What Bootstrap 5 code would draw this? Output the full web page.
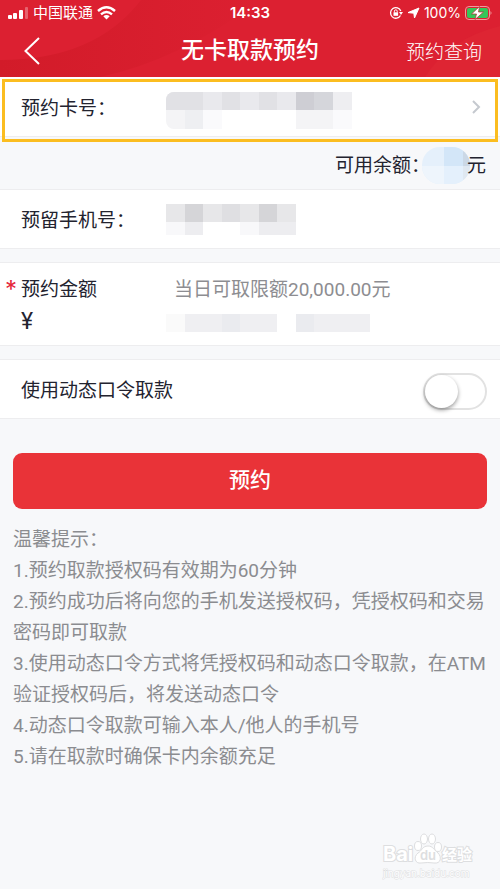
<!DOCTYPE html>
<html lang="zh-CN">
<head>
<meta charset="utf-8">
<meta name="viewport" content="width=device-width, initial-scale=1">
<title>无卡取款预约</title>
<link href="https://cdn.jsdelivr.net/npm/bootstrap@5.3.0/dist/css/bootstrap.min.css" rel="stylesheet">
<style>
body{font-family:Roboto,"Noto Sans CJK SC",sans-serif;font-size:19px;line-height:28px;color:#23232f;background:#f7f8fa}
.app-head{background:#dc2031;height:77px;color:#fff}
.head-art{z-index:0}
.status-bar{height:25px;font-family:Inter,"Noto Sans CJK SC",sans-serif;font-size:14px;line-height:24px}
.carrier,.clock{font-size:15px}
.side{flex:1 1 0}
.title{font-size:23px;line-height:32px;font-weight:500}
.nav-row{height:52px;padding:0 18px}
.back{margin-left:6px}
.head-link{color:#fff;font-weight:300}
.panel{background:#fff;border-top:1px solid #ededef;border-bottom:1px solid #ededef}
.first-panel{border-top:0;height:60px}
.form-line{height:60px}
.side-pad{padding-left:21px}
.label-col{width:145px}
.label-text,.star,.limit{padding-top:4px}
.frame{inset:2px 2px -6px 2px;border:3px solid #fbbd20;pointer-events:none}
.balance{height:52px;padding:6px 14px 0 0}
.masked-sum{margin:0 -3px 0 -8px}
.amount-panel{height:84px;padding-top:9px}
.gap-a{margin-top:13px}
.limit{color:#8d8d91;margin-left:8px}
.star{color:#e5263a;width:21px;padding-left:5px;font-family:Inter,sans-serif;font-size:24px}
.yen{font-size:23px}
.form-check-input.toggle{width:64px;height:37px;margin-right:13px;border:2px solid #e2e2e2;background:#fff;border-radius:19px;appearance:none}
.form-check-input.toggle::before{content:"";display:block;width:33px;height:33px;border-radius:50%;background:#fff;box-shadow:0 2px 4px #0006}
.form-check-input.toggle:checked{background:#e93338}
.form-check-input.toggle:checked::before{margin-left:27px}
.submit{background:#e93338;color:#fff;border-radius:9px;height:56px;font-size:21px;font-weight:500;border:0}
.submit:hover{background:#d92a30;color:#fff}
.submit-area{padding:34px 13px 0}
.tips{color:#8b8c90;line-height:31px;padding:15px 10px 0 13px}
.watermark{right:20px;bottom:4px}
</style>
<script src="https://cdn.jsdelivr.net/npm/bootstrap@5.3.0/dist/js/bootstrap.bundle.min.js"></script>
</head>
<body class="min-vh-100 position-relative">
<header class="app-head position-relative overflow-hidden">
  <svg class="head-art position-absolute top-0 start-0 w-100 h-100" viewBox="0 0 500 77" preserveAspectRatio="none" aria-hidden="true">
    <defs><linearGradient id="shade" x1="0" y1="0" x2="1" y2="0"><stop offset="0" stop-color="#d21b29"/><stop offset="1" stop-color="#dc2031"/></linearGradient></defs>
    <path d="M0 60Q95 60 141 0H260Q180 60 100 77H0Z" fill="url(#shade)"/>
    <path d="M425 77Q450 38 500 26V77Z" fill="#e02a36" opacity=".5"/>
  </svg>
  <div class="status-bar d-flex align-items-center px-2 position-relative">
    <div class="side d-flex align-items-center">
      <svg width="21" height="12" fill="#fff" aria-hidden="true"><rect y="8" width="4" height="4" rx="1"/><rect x="5" y="6" width="4" height="6" rx="1"/><rect x="11" y="3" width="4" height="9" rx="1"/><rect x="17" width="3" height="12" rx="1" opacity=".3"/></svg>
      <span class="carrier ms-1">中国联通</span>
      <svg class="ms-1" width="19" height="14" viewBox="0 0 19 14" fill="none" stroke="#fff" stroke-width="2.4" aria-hidden="true"><path d="M1 5Q9.500-2.500 18 5M4 8.300Q9.500 3.500 15 8.300"/><path d="M6.300 10.300Q9.500 7.700 12.700 10.300L9.500 13.500Z" fill="#fff" stroke="none"/></svg>
    </div>
    <span class="clock fw-semibold">14:33</span>
    <div class="side d-flex align-items-center justify-content-end">
      <svg width="14" height="14" viewBox="0 0 14 14" fill="none" stroke="#fff" stroke-width="1.300" aria-hidden="true"><path d="M11.500 9.500A5.300 5.300 0 1 1 11.800 5"/><path d="M10 6h4l-2 3z" fill="#fff" stroke="none"/><rect x="4.500" y="6.300" width="4.600" height="3.500" fill="#fff" stroke="none"/><path d="M5.400 6.500V5.200a1.400 1.400 0 0 1 2.800 0v1.300" stroke-width="1"/></svg>
      <svg class="mx-1" width="13" height="12" viewBox="0 0 13 12" fill="#fff" stroke="#fff" stroke-linejoin="round" aria-hidden="true"><path d="M12 1L7.500 11 6.800 6.200 1 5.600Z"/></svg>
      <span>100%</span>
      <svg class="ms-1" width="27" height="14" viewBox="0 0 27 14" aria-hidden="true"><rect x=".5" y=".5" width="24" height="13" rx="3.500" fill="none" stroke="#f09a9e"/><rect x="2" y="2" width="21" height="10" rx="2" fill="#35c759"/><path d="M25.500 5q2 2 0 4z" fill="#f09a9e"/><path d="M14.500.5L6.500 8h5L10 13.500 18.500 6h-5z" fill="#fff" stroke="#b52b32" stroke-width=".7"/></svg>
    </div>
  </div>
  <nav class="nav-row d-flex align-items-center position-relative" aria-label="页面导航">
    <div class="side"><button class="back btn p-0 border-0 d-flex" type="button" aria-label="返回"><svg width="17" height="28" fill="none" stroke="#fff" stroke-width="2"><path d="M15 1L1.500 14 15 27"/></svg></button></div>
    <h1 class="title m-0">无卡取款预约</h1>
    <div class="side d-flex justify-content-end pt-1"><a class="head-link text-decoration-none" href="#">预约查询</a></div>
  </nav>
</header>
<main>
  <section class="panel first-panel side-pad d-flex align-items-center position-relative">
    <span class="label-col label-text">预约卡号：</span>
    <svg class="mt-2" width="187" height="38" shape-rendering="crispEdges" role="img" aria-label="卡号已隐藏"><defs><clipPath id="soft"><rect width="220" height="37" rx="8"/></clipPath></defs><g clip-path="url(#soft)"><path fill="#e9e9ed" d="M0 0h186v18H0z"/><path fill="#e1e1e5" d="M0 0h37v18H0zM56 0h18v18H56zM93 0h18v18H93z"/><path fill="#ceced4" d="M130 0h18v18h-18z"/><path fill="#d5d6db" d="M148 0h19v18h-19z"/><path fill="#eeeef1" d="M167 0h19v18h-19z"/><path fill="#f4f4f6" d="M0 18h19v19H0zM130 18h37v19h-37z"/><path fill="#eeeff2" d="M19 18h18v19H19z"/><path fill="#fafafc" d="M37 18h19v19H37zM167 18h19v19h-19z"/></g></svg>
    <svg class="ms-auto me-3" width="14" height="16" fill="none" stroke="#c5c9cf" stroke-width="2" aria-hidden="true"><path d="M3 2l6 6-6 6"/></svg>
    <div class="frame position-absolute"></div>
  </section>
  <div class="balance d-flex align-items-center justify-content-end">
    <span>可用余额：</span>
    <svg class="masked-sum flex-shrink-0" width="48" height="38" role="img" aria-label="余额已隐藏"><defs><clipPath id="pill"><rect width="48" height="37" rx="18"/></clipPath></defs><g clip-path="url(#pill)"><path fill="#e5f0fb" d="M0 0h48v37H0z"/><path fill="#d3e6f8" d="M22 0h19v19H22z"/><path fill="#eef5fc" d="M0 19h22v18H0z"/><path fill="#e4f0fc" d="M22 19h19v18H22z"/><path fill="#cbd8e6" d="M41 0h7v19h-7z"/><path fill="#dfe8f1" d="M41 19h7v18h-7z"/></g></svg><span>元</span>
  </div>
  <section class="panel form-line side-pad d-flex align-items-center">
    <span class="label-col label-text">预留手机号：</span>
    <svg width="130" height="31" shape-rendering="crispEdges" role="img" aria-label="手机号已隐藏"><path fill="#e7e7e9" d="M0 0h130v18H0z"/><path fill="#d5d5d8" d="M19 0h18v18H19zM93 0h18v18H93z"/><path fill="#dfdfe2" d="M56 0h18v18H56z"/><path fill="#f8f8fa" d="M0 18h19v13H0zM74 18h19v13H74z"/><path fill="#ededf0" d="M19 18h18v13H19zM93 18h37v13H93z"/></svg>
  </section>
  <section class="panel amount-panel gap-a">
    <div class="d-flex align-items-center"><span class="star">*</span><span class="label-col label-text">预约金额</span><span class="limit">当日可取限额20,000.00元</span></div>
    <div class="side-pad d-flex align-items-center mt-1"><span class="label-col yen">¥</span>
      <svg class="mt-1" width="205" height="20" shape-rendering="crispEdges" role="img" aria-label="金额已隐藏"><path fill="#fafafa" d="M0 0h19v18H0z"/><path fill="#efeff2" d="M19 0h92v18H19zM130 0h74v18h-74z"/><path fill="#eaebef" d="M56 0h18v18H56zM130 0h18v18h-18z"/></svg>
    </div>
  </section>
  <section class="panel form-line gap-a side-pad d-flex align-items-center">
    <label class="label-text" for="dynamic">使用动态口令取款</label>
    <input class="form-check-input toggle ms-auto mt-1 mb-0" type="checkbox" role="switch" id="dynamic">
  </section>
  <div class="submit-area"><button class="submit btn w-100" type="button">预约</button></div>
  <section class="tips">
    <p class="m-0">温馨提示：</p>
    <p class="m-0">1.预约取款授权码有效期为60分钟</p>
    <p class="m-0">2.预约成功后将向您的手机发送授权码，凭授权码和交易密码即可取款</p>
    <p class="m-0">3.使用动态口令方式将凭授权码和动态口令取款，在ATM验证授权码后，将发送动态口令</p>
    <p class="m-0">4.动态口令取款可输入本人/他人的手机号</p>
    <p class="m-0">5.请在取款时确保卡内余额充足</p>
  </section>
</main>
<svg class="watermark position-absolute" width="98" height="52" viewBox="0 0 98 52" fill="#fff" stroke="#dddee0" stroke-width="1" aria-hidden="true">
  <g font-family="Inter,'Noto Sans CJK SC',sans-serif" font-weight="700" paint-order="stroke" stroke-width="2">
    <text x="1" y="28" font-size="20">Bai</text><text x="60" y="27" font-size="15">经验</text>
    <text x="1" y="44" font-size="10" font-weight="400" stroke-width="1">jingyan.baidu.com</text>
  </g>
  <ellipse cx="36" cy="13" rx="3.500" ry="4.500"/><ellipse cx="42" cy="6" rx="3.500" ry="5"/><ellipse cx="50" cy="6" rx="3.500" ry="5"/><ellipse cx="56" cy="14" rx="3.500" ry="4.500"/>
  <path d="M46 13C40 13 40 18 36 20C31 24 33 31 39 30Q46 29 52 30C59 31 60 24 56 20C52 17 51 13 46 13Z"/>
  <text x="38" y="27" font-family="Inter,sans-serif" font-size="13" font-weight="600" fill="#dddee0" stroke="none">du</text>
</svg>
</body>
</html>
